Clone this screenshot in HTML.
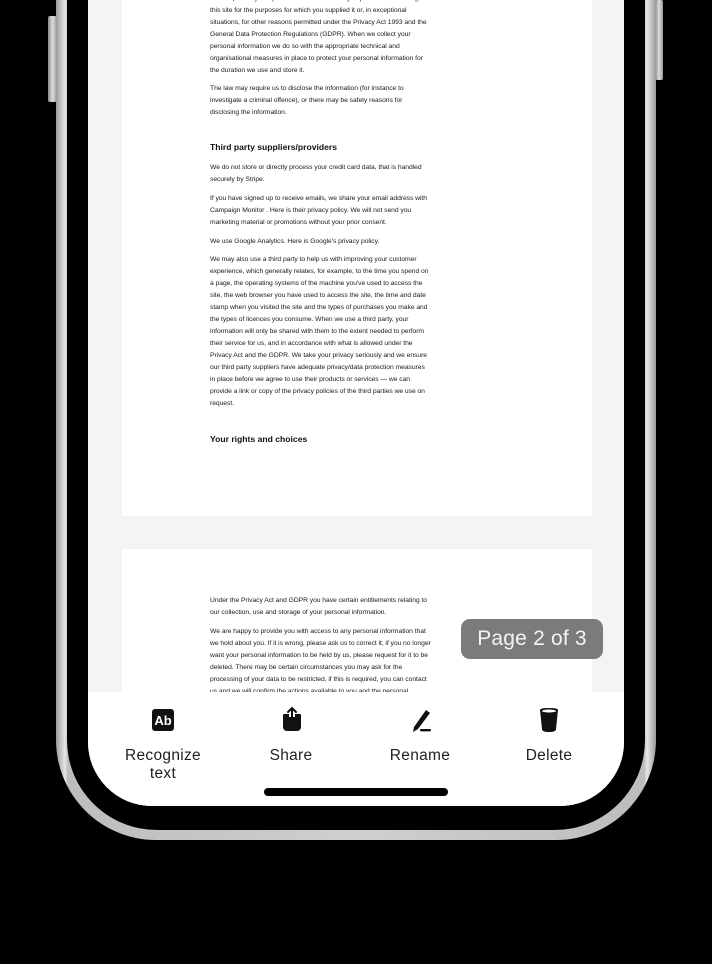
<!DOCTYPE html>
<html><head><meta charset="utf-8"><style>
*{margin:0;padding:0;box-sizing:border-box}
html,body{width:712px;height:964px;background:#000;overflow:hidden;position:relative;font-family:"Liberation Sans",sans-serif}
.abs{position:absolute}
.frame{left:56px;top:-120px;width:600px;height:960px;border-radius:100px;background:linear-gradient(90deg,#9a9a9a,#e6e6e6 1.5%,#bdbdbd 2%,#cfcfcf 50%,#bdbdbd 98%,#e6e6e6 98.5%,#9a9a9a)}
.bezel{left:67px;top:-120px;width:578px;height:950px;border-radius:90px;background:#000}
.screen{left:88px;top:-120px;width:536px;height:926px;border-radius:64px;background:#f4f4f4;overflow:hidden}
.page{background:#fff;left:34px;width:470px}
.t{position:absolute;left:122px;font-size:6.75px;line-height:12px;color:#1a1a1a;white-space:nowrap;letter-spacing:-0.05px}
.h{position:absolute;left:122px;font-size:8.6px;font-weight:bold;color:#111;white-space:nowrap}
.tb{left:0;width:536px;top:812px;height:120px;background:#fff}
.lab{position:absolute;font-size:15.5px;color:#222;text-align:center;width:120px;line-height:18px;letter-spacing:0.3px}
.btn{background:linear-gradient(90deg,#888,#ddd,#999)}
</style></head><body>
<div class="abs btn" style="left:48px;top:16px;width:9px;height:86px;border-radius:2px"></div>
<div class="abs btn" style="left:655px;top:0;width:8px;height:80px;border-radius:2px"></div>
<div class="abs frame"></div>
<div class="abs bezel"></div>
<div class="abs screen">
 <div class="abs page" style="top:0;height:636px"></div>
 <div class="abs page" style="top:669px;height:300px"></div>
 <div class="t" style="top:113px">We will primarily use personal information that you provide to us through<br>this site for the purposes for which you supplied it or, in exceptional<br>situations, for other reasons permitted under the Privacy Act 1993 and the<br>General Data Protection Regulations (GDPR). When we collect your<br>personal information we do so with the appropriate technical and<br>organisational measures in place to protect your personal information for<br>the duration we use and store it.</div>
 <div class="t" style="top:203px">The law may require us to disclose the information (for instance to<br>investigate a criminal offence), or there may be safety reasons for<br>disclosing the information.</div>
 <div class="h" style="top:262px">Third party suppliers/providers</div>
 <div class="t" style="top:282px">We do not store or directly process your credit card data, that is handled<br>securely by Stripe.</div>
 <div class="t" style="top:313px">If you have signed up to receive emails, we share your email address with<br>Campaign Monitor . Here is their privacy policy. We will not send you<br>marketing material or promotions without your prior consent.</div>
 <div class="t" style="top:356px">We use Google Analytics. Here is Google's privacy policy.</div>
 <div class="t" style="top:374px">We may also use a third party to help us with improving your customer<br>experience, which generally relates, for example, to the time you spend on<br>a page, the operating systems of the machine you've used to access the<br>site, the web browser you have used to access the site, the time and date<br>stamp when you visited the site and the types of purchases you make and<br>the types of licences you consume. When we use a third party, your<br>information will only be shared with them to the extent needed to perform<br>their service for us, and in accordance with what is allowed under the<br>Privacy Act and the GDPR. We take your privacy seriously and we ensure<br>our third party suppliers have adequate privacy/data protection measures<br>in place before we agree to use their products or services — we can<br>provide a link or copy of the privacy policies of the third parties we use on<br>request.</div>
 <div class="h" style="top:554px">Your rights and choices</div>
 <div class="t" style="top:715px">Under the Privacy Act and GDPR you have certain entitlements relating to<br>our collection, use and storage of your personal information.</div>
 <div class="t" style="top:746px">We are happy to provide you with access to any personal information that<br>we hold about you. If it is wrong, please ask us to correct it; if you no longer<br>want your personal information to be held by us, please request for it to be<br>deleted. There may be certain circumstances you may ask for the<br>processing of your data to be restricted, if this is required, you can contact<br>us and we will confirm the actions available to you and the personal</div>
 <div class="abs" style="left:373px;top:739px;width:142px;height:40px;border-radius:9px;background:#7b7b7b;color:#f4f4f4;font-size:21px;line-height:40px;text-align:center;letter-spacing:0.2px">Page 2 of 3</div>
 <div class="abs tb">
  <svg class="abs" style="left:63px;top:16px" width="24" height="24" viewBox="0 0 24 24"><rect x="1" y="1" width="22" height="22" rx="3" fill="#111"/><text x="12" y="17" font-family="Liberation Sans" font-size="13" font-weight="bold" fill="#fff" text-anchor="middle">Ab</text></svg>
  <svg class="abs" style="left:192px;top:13px" width="24" height="28" viewBox="0 0 24 28"><path d="M4 9h5v3h6V9h5a1 1 0 0 1 1 1v12a4 4 0 0 1-4 4H7a4 4 0 0 1-4-4V10a1 1 0 0 1 1-1z" fill="#111"/><path d="M12 15V3M8 7l4-4 4 4" stroke="#111" stroke-width="2" fill="none" stroke-linecap="round"/></svg>
  <svg class="abs" style="left:320px;top:16px" width="26" height="26" viewBox="0 0 26 26"><path d="M18 2l4 3-12 16-5 3 1-5z" fill="#111"/><rect x="12" y="21" width="11" height="2.4" rx="1" fill="#111"/></svg>
  <svg class="abs" style="left:451px;top:15px" width="20" height="26" viewBox="0 0 20 26"><path d="M1 3q0-2 9-2t9 2l-2 19q0 3-7 3t-7-3z" fill="#111"/><ellipse cx="10" cy="4" rx="7" ry="1.5" fill="#fff"/></svg>
  <div class="lab" style="left:15px;top:55px">Recognize<br>text</div>
  <div class="lab" style="left:143px;top:55px">Share</div>
  <div class="lab" style="left:272px;top:55px">Rename</div>
  <div class="lab" style="left:401px;top:55px">Delete</div>
  <div class="abs" style="left:176px;top:96px;width:184px;height:8px;border-radius:4px;background:#000"></div>
 </div>
</div>
</body></html>
